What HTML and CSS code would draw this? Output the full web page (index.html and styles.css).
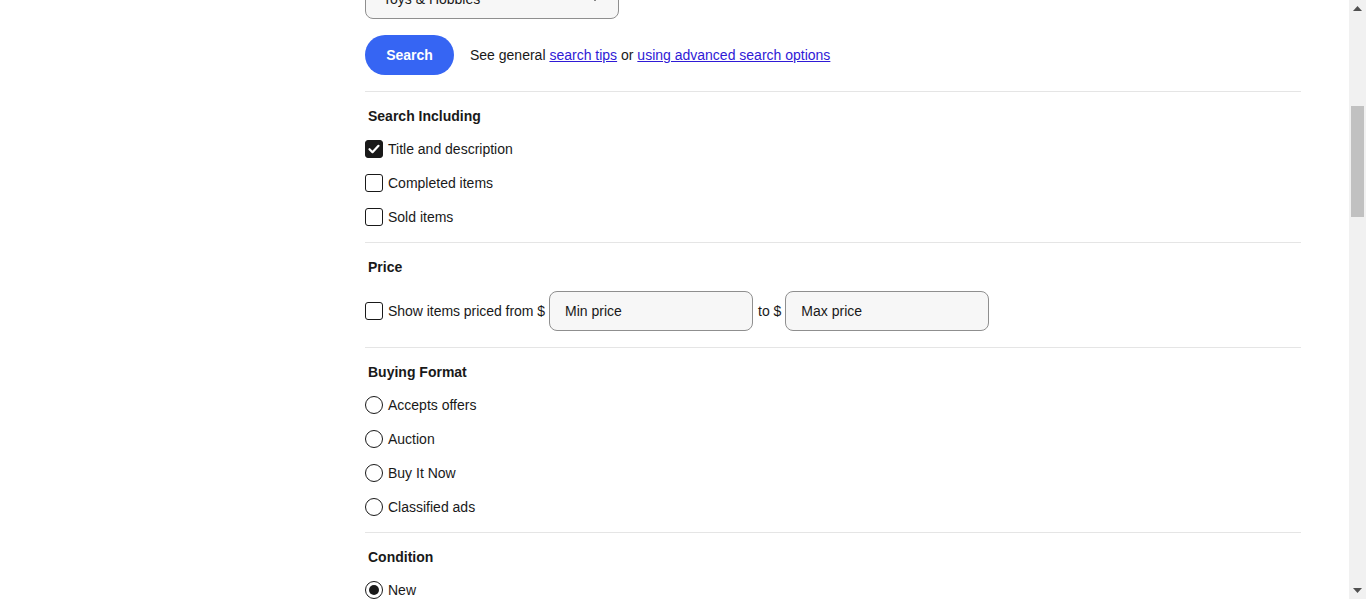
FILE: index.html
```html
<!DOCTYPE html>
<html>
<head>
<meta charset="utf-8">
<link rel="stylesheet" href="styles.css">
</head>
<body>
<div class="page">
  <main class="main">
    <div class="form">
      <div class="select">
        <span class="select-text">Toys &amp; Hobbies</span>
        <svg class="select-arrow" width="10" height="6" viewBox="0 0 10 6"><path d="M1 1l4 4 4-4z" fill="#191919"/></svg>
      </div>
      <div class="search-row">
        <button class="btn">Search</button>
        <span class="tips">See general <a href="#">search tips</a> or <a href="#">using advanced search options</a></span>
      </div>

      <section class="section">
        <h3 class="heading">Search Including</h3>
        <div class="list">
          <label class="row"><span class="cb checked"><svg width="14" height="14" viewBox="0 0 14 14"><path d="M2.5 7.2l3 3 6-6.4" fill="none" stroke="#fff" stroke-width="2.2" stroke-linecap="round" stroke-linejoin="round"/></svg></span><span class="lbl">Title and description</span></label>
          <label class="row"><span class="cb"></span><span class="lbl">Completed items</span></label>
          <label class="row"><span class="cb"></span><span class="lbl">Sold items</span></label>
        </div>
      </section>

      <section class="section section-price">
        <h3 class="heading">Price</h3>
        <div class="price-row">
          <span class="cb"></span><span class="lbl lbl-price">Show items priced from $</span>
          <div class="input">Min price</div>
          <span class="to">to $</span>
          <div class="input">Max price</div>
        </div>
      </section>

      <section class="section">
        <h3 class="heading">Buying Format</h3>
        <div class="list">
          <label class="row"><span class="radio"></span><span class="lbl">Accepts offers</span></label>
          <label class="row"><span class="radio"></span><span class="lbl">Auction</span></label>
          <label class="row"><span class="radio"></span><span class="lbl">Buy It Now</span></label>
          <label class="row"><span class="radio"></span><span class="lbl">Classified ads</span></label>
        </div>
      </section>

      <section class="section">
        <h3 class="heading">Condition</h3>
        <div class="list">
          <label class="row"><span class="radio checked"></span><span class="lbl">New</span></label>
        </div>
      </section>
    </div>
  </main>
  <div class="scrollbar">
    <div class="sb-btn"><svg width="9" height="5" viewBox="0 0 9 5"><path d="M0 5L4.5 0 9 5z" fill="#505050"/></svg></div>
    <div class="sb-thumb"></div>
    <div class="sb-space"></div>
    <div class="sb-btn"><svg width="9" height="5" viewBox="0 0 9 5"><path d="M0 0L4.5 5 9 0z" fill="#505050"/></svg></div>
  </div>
</div>
</body>
</html>
```

FILE: styles.css
```css
html, body {
  margin: 0;
  padding: 0;
  height: 100%;
  overflow: hidden;
  background: #fff;
}
body {
  font-family: "Liberation Sans", Arial, sans-serif;
  font-size: 14px;
  color: #191919;
}
.page {
  display: flex;
  height: 599px;
}
.main {
  flex: 1;
  overflow: hidden;
}
.form {
  margin-left: 365px;
  width: 936px;
}
.select {
  margin-top: -21px;
  height: 38px;
  border: 1px solid #8f8f8f;
  border-radius: 8px;
  background: #f7f7f7;
  display: flex;
  align-items: center;
  justify-content: space-between;
  padding: 0 18px 0 17px;
  box-sizing: content-box;
  width: 217px;
}
.select-text {
  font-size: 14px;
}
.search-row {
  display: flex;
  align-items: center;
  margin-top: 16px;
  height: 40px;
  margin-bottom: 16px;
}
.btn {
  height: 40px;
  width: 89px;
  border: none;
  border-radius: 20px;
  background: #3665f3;
  color: #fff;
  font-family: "Liberation Sans", Arial, sans-serif;
  font-weight: bold;
  font-size: 14px;
  padding: 0;
}
.tips {
  margin-left: 16px;
}
.tips a {
  color: #2f1ad6;
  text-decoration: underline;
}
.section {
  border-top: 1px solid #e5e5e5;
  padding: 14px 0 8px;
}
.section-price {
  padding-bottom: 16px;
}
.heading {
  margin: 0;
  padding-left: 3px;
  font-size: 14px;
  line-height: 20px;
  font-weight: bold;
}
.list {
  margin-top: 6px;
  display: flex;
  flex-direction: column;
}
.row {
  height: 34px;
  display: flex;
  align-items: center;
}
.lbl {
  margin-left: 5px;
}
.lbl-price {
  margin-left: 5px;
  letter-spacing: -0.04px;
}
.cb {
  width: 18px;
  height: 18px;
  box-sizing: border-box;
  border: 1.5px solid #191919;
  border-radius: 3px;
  display: flex;
  align-items: center;
  justify-content: center;
  flex: none;
}
.cb.checked {
  background: #191919;
}
.radio {
  width: 18px;
  height: 18px;
  box-sizing: border-box;
  border: 1.5px solid #191919;
  border-radius: 50%;
  display: flex;
  align-items: center;
  justify-content: center;
  flex: none;
}
.radio.checked::after {
  content: "";
  width: 10px;
  height: 10px;
  border-radius: 50%;
  background: #191919;
}
.price-row {
  margin-top: 14px;
  height: 40px;
  display: flex;
  align-items: center;
}
.input {
  margin-left: 4px;
  width: 204px;
  height: 40px;
  box-sizing: border-box;
  border: 1px solid #8f8f8f;
  border-radius: 8px;
  background: #f7f7f7;
  padding-left: 15px;
  display: flex;
  align-items: center;
}
.to {
  margin-left: 5px;
}
.scrollbar {
  width: 17px;
  flex: none;
  background: #f1f1f1;
  display: flex;
  flex-direction: column;
}
.sb-btn {
  height: 17px;
  display: flex;
  align-items: center;
  justify-content: center;
}
.sb-thumb {
  margin: 89px 2px 0;
  height: 111px;
  background: #c1c1c1;
}
.sb-space {
  flex: 1;
}
```
